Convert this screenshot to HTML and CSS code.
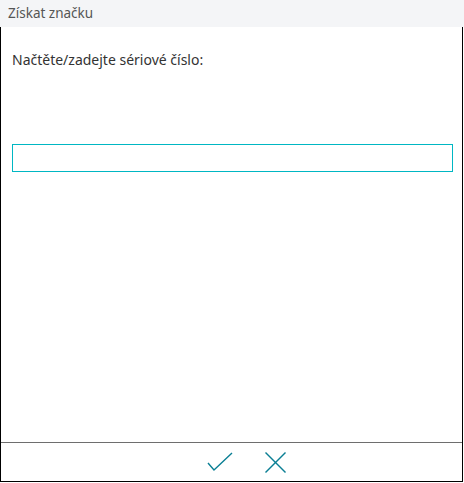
FILE: index.html
```html
<!DOCTYPE html>
<html lang="cs">
<head>
    <meta charset="UTF-8">
    <meta name="viewport" content="width=device-width, initial-scale=1.0">
    <link rel="stylesheet" href="styles.css">
    <title>Získat značku</title>
</head>
<body>
    <header class="title-bar">Získat značku</header>

    <div class="dialog">
        <div class="dialog-body">
            <label class="prompt" for="serial">Načtěte/zadejte sériové číslo:</label>
            <input class="serial-input" type="text" id="serial" name="serial">
        </div>

        <div class="dialog-actions">
            <button class="icon-btn" type="button" title="OK">
                <svg width="26" height="20" viewBox="0 0 26 20">
                    <polyline points="1,11 7,18 25,1" fill="none" stroke="#0a7f94" stroke-width="1.4"/>
                </svg>
            </button>
            <button class="icon-btn" type="button" title="Zrušit">
                <svg width="21" height="21" viewBox="0 0 21 21">
                    <line x1="0.5" y1="0.5" x2="20.5" y2="20.5" stroke="#0a7f94" stroke-width="1.4"/>
                    <line x1="20.5" y1="0.5" x2="0.5" y2="20.5" stroke="#0a7f94" stroke-width="1.4"/>
                </svg>
            </button>
        </div>
    </div>
</body>
</html>
```

FILE: styles.css
```css
body {
    font-family: "Noto Sans", "Open Sans", sans-serif;
    margin: 0;
    padding: 0;
    background-color: #fff;
    width: 464px;
    height: 483px;
}

.title-bar {
    height: 27px;
    line-height: 27px;
    padding-left: 8px;
    background-color: #f4f5f7;
    color: #555;
    font-size: 13.5px;
}

.dialog {
    width: 461px;
    height: 454px;
    border: 1px solid #000;
    border-top: none;
    display: flex;
    flex-direction: column;
}

.dialog-body {
    flex: 1;
    padding: 23px 10px 0 11px;
    display: flex;
    flex-direction: column;
}

.prompt {
    font-size: 14px;
    line-height: 20px;
    color: #333;
    margin-bottom: 74px;
}

.serial-input {
    box-sizing: border-box;
    width: 441px;
    height: 28px;
    border: 1px solid #00b7c3;
    outline: none;
    padding: 0 6px;
    font-size: 14px;
    font-family: inherit;
}

.dialog-actions {
    height: 38px;
    border-top: 1px solid #6e6e6e;
    display: flex;
    justify-content: center;
    align-items: center;
    gap: 32px;
    padding-left: 30px;
}

.icon-btn {
    background: none;
    border: none;
    padding: 0;
    cursor: pointer;
    display: flex;
    align-items: center;
}
```
